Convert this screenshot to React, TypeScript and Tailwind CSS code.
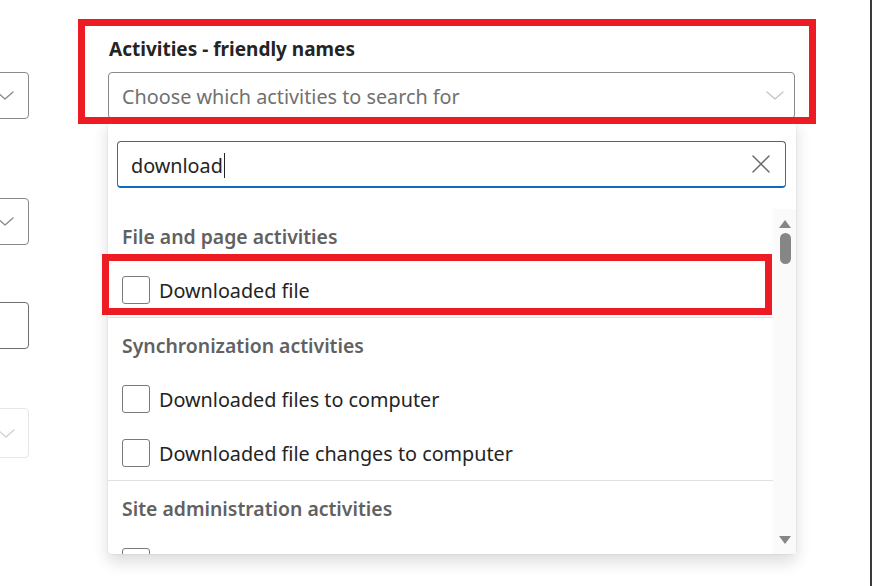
import React from "react";

const FONT = { fontFamily: '"Noto Sans", "Open Sans", Arial, sans-serif' };

function Chevron({ className }: { className?: string }) {
  return (
    <svg width="18" height="9" viewBox="0 0 18 9" fill="none" className={className}>
      <path d="M1 1 L9 8 L17 1" stroke="currentColor" strokeWidth="1.3" strokeLinecap="round" strokeLinejoin="round" />
    </svg>
  );
}

function Checkbox() {
  return <div className="w-[28px] h-[28px] shrink-0 rounded-[3px] border border-[#7a7a7a] bg-white" />;
}

function Item({ label }: { label?: string }) {
  return (
    <div className="h-[54px] shrink-0 flex items-center pl-[14px] gap-[9px]">
      <Checkbox />
      {label && <span className="text-[19.8px] text-[#242424] leading-none pt-[2px]">{label}</span>}
    </div>
  );
}

function Header({ label }: { label: string }) {
  return (
    <div className="h-[54px] shrink-0 flex items-center pl-[14px]">
      <span className="text-[19.4px] font-semibold text-[#616161] leading-none pt-[2px]">{label}</span>
    </div>
  );
}

export default function App() {
  return (
    <div className="relative w-[873px] h-[586px] bg-white overflow-hidden flex" style={FONT}>
      {/* left partial controls */}
      <div className="w-[30px] shrink-0 flex flex-col">
        <div className="mt-[72px] ml-[-31px] w-[60px] h-[47px] shrink-0 rounded-[4px] border border-[#8a8a8a] flex items-center justify-end pr-[14px] text-[#8a8a8a]">
          <Chevron />
        </div>
        <div className="mt-[79px] ml-[-31px] w-[60px] h-[47px] shrink-0 rounded-[4px] border border-[#8a8a8a] flex items-center justify-end pr-[14px] text-[#8a8a8a]">
          <Chevron />
        </div>
        <div className="mt-[57px] ml-[-31px] w-[60px] h-[47px] shrink-0 rounded-[4px] border border-[#6e6e6e]" />
        <div className="mt-[59px] ml-[-31px] w-[60px] h-[50px] shrink-0 rounded-[4px] border border-[#e6e6e6] flex items-center justify-end pr-[13px] text-[#d0d0d0]">
          <Chevron />
        </div>
      </div>

      {/* main column */}
      <div className="ml-[78px] w-[688px] shrink-0 flex flex-col">
        <div className="mt-[36px] h-[26px] shrink-0 flex items-center pl-[1px]">
          <span className="text-[19px] font-bold text-[#242424] leading-none pt-[1px]">Activities - friendly names</span>
        </div>
        <div className="mt-[10px] w-[687px] h-[47px] shrink-0 rounded-[4px] border border-[#8a8a8a] flex items-center pl-[13px] pr-[10px]">
          <span className="flex-1 text-[19.8px] text-[#707070] leading-none pt-[2px]">Choose which activities to search for</span>
          <Chevron className="text-[#c4c4c4]" />
        </div>

        {/* dropdown panel */}
        <div className="relative mt-[-1px] h-[436px] shrink-0 bg-white rounded-b-[4px] shadow-[0_0_2px_rgba(0,0,0,0.12),0_8px_16px_rgba(0,0,0,0.14)] flex flex-col">
          <div className="mt-[23px] ml-[9px] mr-[10px] h-[47px] shrink-0 rounded-[4px] border border-[#616161] border-b-[2px] border-b-[#0f6cbd] flex items-center pl-[13px] pr-[15px]">
            <span className="text-[19.8px] text-[#242424] leading-none pt-[3px]">download</span>
            <span className="w-[1px] h-[25px] bg-[#242424] ml-[1px] mt-[2px]" />
            <span className="flex-1" />
            <svg width="18" height="18" viewBox="0 0 18 18" fill="none">
              <path d="M1 1 L17 17 M17 1 L1 17" stroke="#6b6b6b" strokeWidth="1.5" strokeLinecap="round" />
            </svg>
          </div>

          <div className="mt-[21px] flex-1 flex overflow-hidden">
            <div className="flex-1 flex flex-col">
              <Header label="File and page activities" />
              <Item label="Downloaded file" />
              <div className="h-[1px] shrink-0 bg-[#e0e0e0]" />
              <Header label="Synchronization activities" />
              <Item label="Downloaded files to computer" />
              <Item label="Downloaded file changes to computer" />
              <div className="h-[1px] shrink-0 bg-[#e0e0e0]" />
              <Header label="Site administration activities" />
              <Item />
            </div>
            <div className="w-[23px] shrink-0 bg-[#fafafa] flex flex-col items-center pl-[1px]">
              <svg width="12" height="8" viewBox="0 0 12 8" className="mt-[11px]">
                <path d="M6 0 L12 8 L0 8 Z" fill="#868686" />
              </svg>
              <div className="mt-[5px] w-[11px] h-[31px] rounded-full bg-[#868686]" />
              <span className="flex-1" />
              <svg width="12" height="8" viewBox="0 0 12 8" className="mb-[10px]">
                <path d="M0 0 L12 0 L6 8 Z" fill="#868686" />
              </svg>
            </div>
          </div>
        </div>
      </div>

      <div className="flex-1" />
      <div className="w-[2px] h-full bg-[#3a3a3a]" />
      <div className="w-[1px]" />

      {/* annotation boxes */}
      <div className="absolute left-[78px] top-[19px] w-[738px] h-[105px] border-[7px] border-[#ed1c24]" />
      <div className="absolute left-[102px] top-[254px] w-[670px] h-[61px] border-[7px] border-[#ed1c24]" />
    </div>
  );
}
